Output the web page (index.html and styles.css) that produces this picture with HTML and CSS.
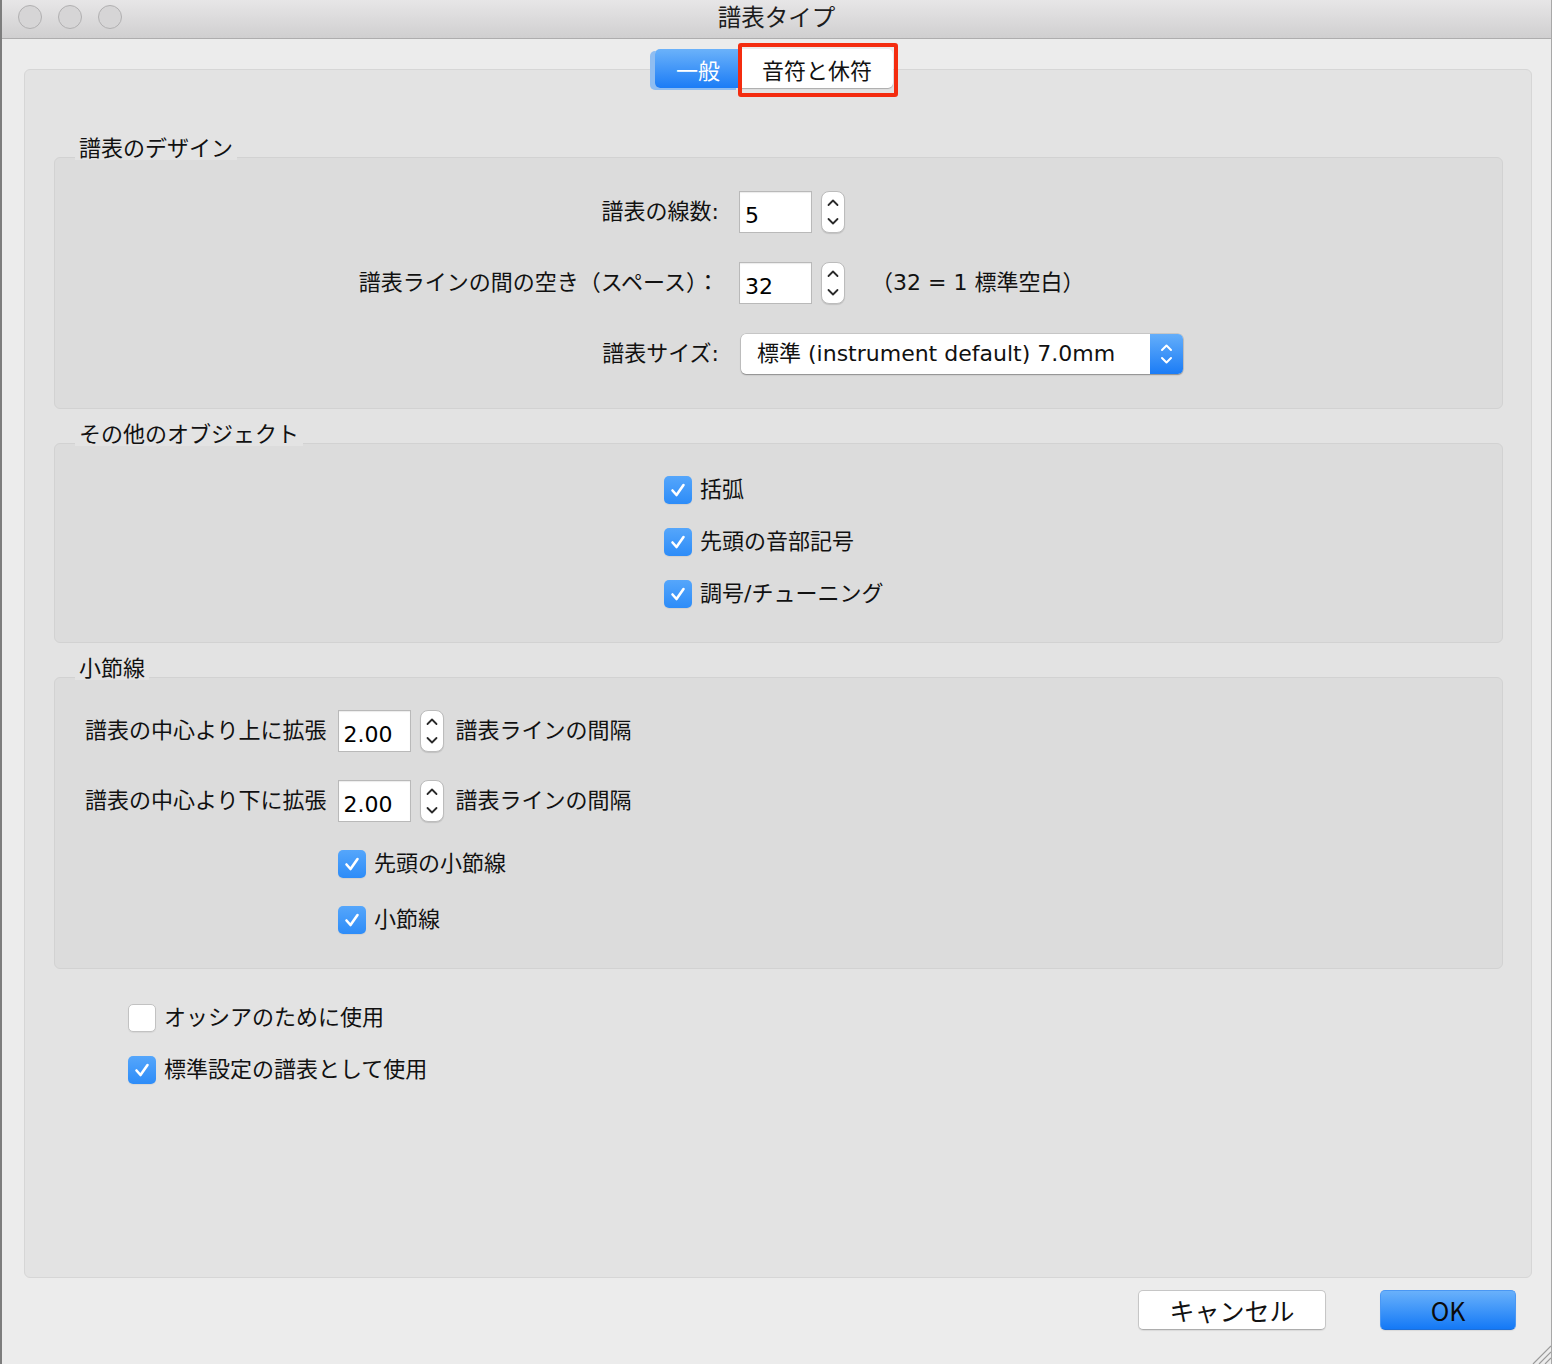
FILE: index.html
```html
<!DOCTYPE html>
<html lang="ja">
<head>
    <meta charset="UTF-8">
    <title>譜表タイプ</title>
    <link rel="stylesheet" href="styles.css">
</head>
<body>
    <div class="window">
        <!-- Title Bar -->
        <header class="titlebar">
            <div class="lights"><span></span><span></span><span></span></div>
            <div class="title">譜表タイプ</div>
            <div></div>
        </header>

        <main class="content">
            <!-- Tabs -->
            <div class="tabs">
                <div class="tab tab-active">一般</div>
                <div class="tab">音符と休符<span class="highlight"></span></div>
            </div>

            <section class="tabview">
                <!-- Staff design -->
                <div class="group">
                    <div class="group-title">譜表のデザイン</div>
                    <div class="group-box design">
                        <div class="row-label">譜表の線数:</div>
                        <div class="controls">
                            <div class="field">5</div>
                            <div class="stepper">
                                <svg width="24" height="42" viewBox="0 0 24 42"><path d="M7.5 14 L12 9.5 L16.5 14 M7.5 28 L12 32.5 L16.5 28" fill="none" stroke="#2a2a2a" stroke-width="1.8" stroke-linecap="round" stroke-linejoin="round"/></svg>
                            </div>
                        </div>

                        <div class="row-label">譜表ラインの間の空き（スペース）：</div>
                        <div class="controls">
                            <div class="field">32</div>
                            <div class="stepper">
                                <svg width="24" height="42" viewBox="0 0 24 42"><path d="M7.5 14 L12 9.5 L16.5 14 M7.5 28 L12 32.5 L16.5 28" fill="none" stroke="#2a2a2a" stroke-width="1.8" stroke-linecap="round" stroke-linejoin="round"/></svg>
                            </div>
                            <span class="note">（32 = 1 標準空白）</span>
                        </div>

                        <div class="row-label">譜表サイズ:</div>
                        <div class="controls">
                            <div class="popup">
                                <span class="popup-text">標準 (instrument default) 7.0mm</span>
                                <span class="popup-arrows">
                                    <svg width="33" height="40" viewBox="0 0 33 40"><path d="M12 16 L16.5 11.5 L21 16 M12 24 L16.5 28.5 L21 24" fill="none" stroke="#fff" stroke-width="2" stroke-linecap="round" stroke-linejoin="round"/></svg>
                                </span>
                            </div>
                        </div>
                    </div>
                </div>

                <!-- Other objects -->
                <div class="group">
                    <div class="group-title">その他のオブジェクト</div>
                    <div class="group-box objects">
                        <div class="check"><span class="box checked"><svg width="28" height="28" viewBox="0 0 28 28"><path d="M8.5 14.5 L12.5 19 L19.5 9" fill="none" stroke="#fff" stroke-width="2.6" stroke-linecap="round" stroke-linejoin="round"/></svg></span>括弧</div>
                        <div class="check"><span class="box checked"><svg width="28" height="28" viewBox="0 0 28 28"><path d="M8.5 14.5 L12.5 19 L19.5 9" fill="none" stroke="#fff" stroke-width="2.6" stroke-linecap="round" stroke-linejoin="round"/></svg></span>先頭の音部記号</div>
                        <div class="check"><span class="box checked"><svg width="28" height="28" viewBox="0 0 28 28"><path d="M8.5 14.5 L12.5 19 L19.5 9" fill="none" stroke="#fff" stroke-width="2.6" stroke-linecap="round" stroke-linejoin="round"/></svg></span>調号/チューニング</div>
                    </div>
                </div>

                <!-- Barlines -->
                <div class="group">
                    <div class="group-title">小節線</div>
                    <div class="group-box barlines">
                        <div class="bar-row">
                            <span>譜表の中心より上に拡張</span>
                            <div class="field">2.00</div>
                            <div class="stepper">
                                <svg width="24" height="42" viewBox="0 0 24 42"><path d="M7.5 14 L12 9.5 L16.5 14 M7.5 28 L12 32.5 L16.5 28" fill="none" stroke="#2a2a2a" stroke-width="1.8" stroke-linecap="round" stroke-linejoin="round"/></svg>
                            </div>
                            <span>譜表ラインの間隔</span>
                        </div>
                        <div class="bar-row">
                            <span>譜表の中心より下に拡張</span>
                            <div class="field">2.00</div>
                            <div class="stepper">
                                <svg width="24" height="42" viewBox="0 0 24 42"><path d="M7.5 14 L12 9.5 L16.5 14 M7.5 28 L12 32.5 L16.5 28" fill="none" stroke="#2a2a2a" stroke-width="1.8" stroke-linecap="round" stroke-linejoin="round"/></svg>
                            </div>
                            <span>譜表ラインの間隔</span>
                        </div>
                        <div class="check bar-check"><span class="box checked"><svg width="28" height="28" viewBox="0 0 28 28"><path d="M8.5 14.5 L12.5 19 L19.5 9" fill="none" stroke="#fff" stroke-width="2.6" stroke-linecap="round" stroke-linejoin="round"/></svg></span>先頭の小節線</div>
                        <div class="check bar-check"><span class="box checked"><svg width="28" height="28" viewBox="0 0 28 28"><path d="M8.5 14.5 L12.5 19 L19.5 9" fill="none" stroke="#fff" stroke-width="2.6" stroke-linecap="round" stroke-linejoin="round"/></svg></span>小節線</div>
                    </div>
                </div>

                <!-- Standalone options -->
                <div class="options">
                    <div class="check"><span class="box"></span>オッシアのために使用</div>
                    <div class="check"><span class="box checked"><svg width="28" height="28" viewBox="0 0 28 28"><path d="M8.5 14.5 L12.5 19 L19.5 9" fill="none" stroke="#fff" stroke-width="2.6" stroke-linecap="round" stroke-linejoin="round"/></svg></span>標準設定の譜表として使用</div>
                </div>
            </section>

            <!-- Buttons -->
            <footer class="buttons">
                <button class="btn">キャンセル</button>
                <button class="btn btn-primary">OK</button>
            </footer>
        </main>

        <svg class="grip" width="22" height="22" viewBox="0 0 22 22"><path d="M22 4 L4 22 M22 10 L10 22 M22 16 L16 22" stroke="#9a9a9a" stroke-width="1.2"/></svg>
    </div>
</body>
</html>
```

FILE: styles.css
```css
/* General Reset */
* {
    margin: 0;
    padding: 0;
    box-sizing: border-box;
}

body {
    background: #8c8c8c;
    color: #111;
    font-family: 'DejaVu Sans', 'Noto Sans CJK JP', sans-serif;
    font-size: 22px;
    width: 1552px;
    height: 1364px;
    overflow: hidden;
}

/* Window */
.window {
    position: relative;
    width: 1552px;
    height: 1364px;
    background: #ececec;
    border-left: 2px solid #7d7d7d;
    border-right: 1px solid #a8a8a8;
}

/* Title Bar */
.titlebar {
    height: 39px;
    display: grid;
    grid-template-columns: 1fr auto 1fr;
    align-items: center;
    background: linear-gradient(#e7e6e7, #d0cfd0);
    border-bottom: 1px solid #aeadae;
}

.lights {
    display: flex;
    gap: 16px;
    padding-left: 16px;
    padding-bottom: 4px;
}

.lights span {
    width: 24px;
    height: 24px;
    border-radius: 50%;
    background: #d6d5d6;
    border: 1px solid #b1b0b1;
}

.title {
    font-family: 'Noto Sans CJK JP', sans-serif;
    font-size: 23.5px;
    line-height: 30px;
    color: #1c1c1c;
    padding-bottom: 6px;
}

/* Content */
.content {
    padding-top: 10px;
}

.tabs {
    position: relative;
    z-index: 2;
    display: flex;
    justify-content: center;
    padding-right: 5px;
    height: 39px;
}

.tab {
    position: relative;
    height: 39px;
    width: 152px;
    display: flex;
    align-items: center;
    justify-content: center;
    background: #fff;
    border-radius: 0 5px 5px 0;
    box-shadow: 0 1px 1px rgba(0, 0, 0, 0.25);
    font-family: 'Noto Sans CJK JP', sans-serif;
    line-height: 30px;
}

.tab-active {
    width: 86px;
    color: #fff;
    border-radius: 5px 0 0 5px;
    background: linear-gradient(#6bb2fa, #1b7cf6);
    box-shadow: -5px 2px 0 #8fbdf1;
}

.highlight {
    position: absolute;
    top: -6px;
    left: -3px;
    right: -5px;
    bottom: -9px;
    border: 4px solid #f42c0f;
    border-radius: 3px;
}

.tabview {
    margin: -19px 19px 0 22px;
    height: 1209px;
    background: #e3e3e3;
    border: 1px solid #d6d6d6;
    border-radius: 6px;
    padding: 66px 28px 0 29px;
}

/* Groups */
.group {
    display: flex;
    flex-direction: column;
    align-items: flex-start;
    margin-bottom: 13px;
}

.group-title {
    position: relative;
    z-index: 1;
    margin-left: 21px;
    margin-bottom: -3px;
    padding: 0 4px 4px;
    background: #e3e3e3;
    font-family: 'Noto Sans CJK JP', sans-serif;
    line-height: 20px;
}

.group-box {
    width: 100%;
    background: #dcdcdc;
    border: 1px solid #d2d2d2;
    border-radius: 6px;
}

.design {
    display: grid;
    grid-template-columns: 664px auto;
    column-gap: 20px;
    row-gap: 29px;
    align-items: center;
    padding: 33px 0 33px;
}

.row-label {
    text-align: right;
    line-height: 30px;
}

.controls {
    display: flex;
    align-items: center;
    height: 42px;
}

.field {
    width: 73px;
    height: 42px;
    background: #fff;
    border: 1px solid #b9b9b9;
    box-shadow: inset 0 1px 1px rgba(0, 0, 0, 0.08);
    padding: 9px 0 0 5px;
    line-height: 30px;
    color: #000;
}

.stepper {
    width: 24px;
    height: 42px;
    margin-left: 9px;
    background: #fff;
    border: 1px solid #bcbcbc;
    border-radius: 8px;
    box-shadow: 0 1px 1px rgba(0, 0, 0, 0.12);
    display: flex;
    align-items: center;
    justify-content: center;
    overflow: hidden;
}

.stepper svg {
    flex: none;
}

.note {
    margin-left: 26px;
    line-height: 30px;
}

.popup {
    margin-left: 2px;
    width: 442px;
    height: 40px;
    display: flex;
    align-items: center;
    background: #fff;
    border-radius: 5px;
    box-shadow: 0 0 0 0.5px rgba(0, 0, 0, 0.18), 0 1px 1.5px rgba(0, 0, 0, 0.3);
    overflow: hidden;
}

.popup-text {
    flex: 1;
    padding-left: 16px;
    line-height: 30px;
}

.popup-arrows {
    width: 33px;
    height: 40px;
    background: linear-gradient(#64aefa, #1b7cf6);
}

.popup-arrows svg {
    display: block;
}

/* Checkboxes */
.check {
    display: flex;
    align-items: center;
    gap: 8px;
    height: 28px;
    line-height: 30px;
}

.box {
    width: 28px;
    height: 28px;
    border-radius: 5px;
    background: #fff;
    border: 1px solid #c2c2c2;
    box-shadow: 0 1px 1px rgba(0, 0, 0, 0.06);
    flex: none;
}

.box.checked {
    border: none;
    background: linear-gradient(#55a6fb, #2d8cf8);
}

.box svg {
    display: block;
}

.objects {
    display: flex;
    flex-direction: column;
    gap: 24px;
    padding: 32px 0 34px 609px;
}

.barlines {
    display: flex;
    flex-direction: column;
    gap: 28px;
    padding: 32px 0 34px 30px;
}

.bar-row {
    display: flex;
    align-items: center;
    height: 42px;
    line-height: 30px;
}

.bar-row .field {
    margin-left: 11px;
}

.bar-row .stepper + span {
    margin-left: 12px;
}

.bar-check {
    margin-left: 253px;
}

.options {
    display: flex;
    flex-direction: column;
    gap: 24px;
    padding: 22px 0 0 74px;
}

/* Buttons */
.buttons {
    display: flex;
    justify-content: flex-end;
    gap: 54px;
    padding: 12px 35px 0 0;
}

.btn {
    width: 188px;
    height: 40px;
    font-family: 'Noto Sans CJK JP', sans-serif;
    font-size: 25px;
    color: #111;
    background: #fff;
    border: 1px solid #c6c6c6;
    border-bottom-color: #adadad;
    border-radius: 5px;
    box-shadow: 0 1px 1px rgba(0, 0, 0, 0.08);
    line-height: 30px;
}

.btn-primary {
    width: 136px;
    background: linear-gradient(#69b1fb, #1479f6);
    border-color: #4a97f3;
    border-bottom-color: #1e6fd8;
    color: #0b0b0b;
}

.grip {
    position: absolute;
    right: 0;
    bottom: 0;
}
```
